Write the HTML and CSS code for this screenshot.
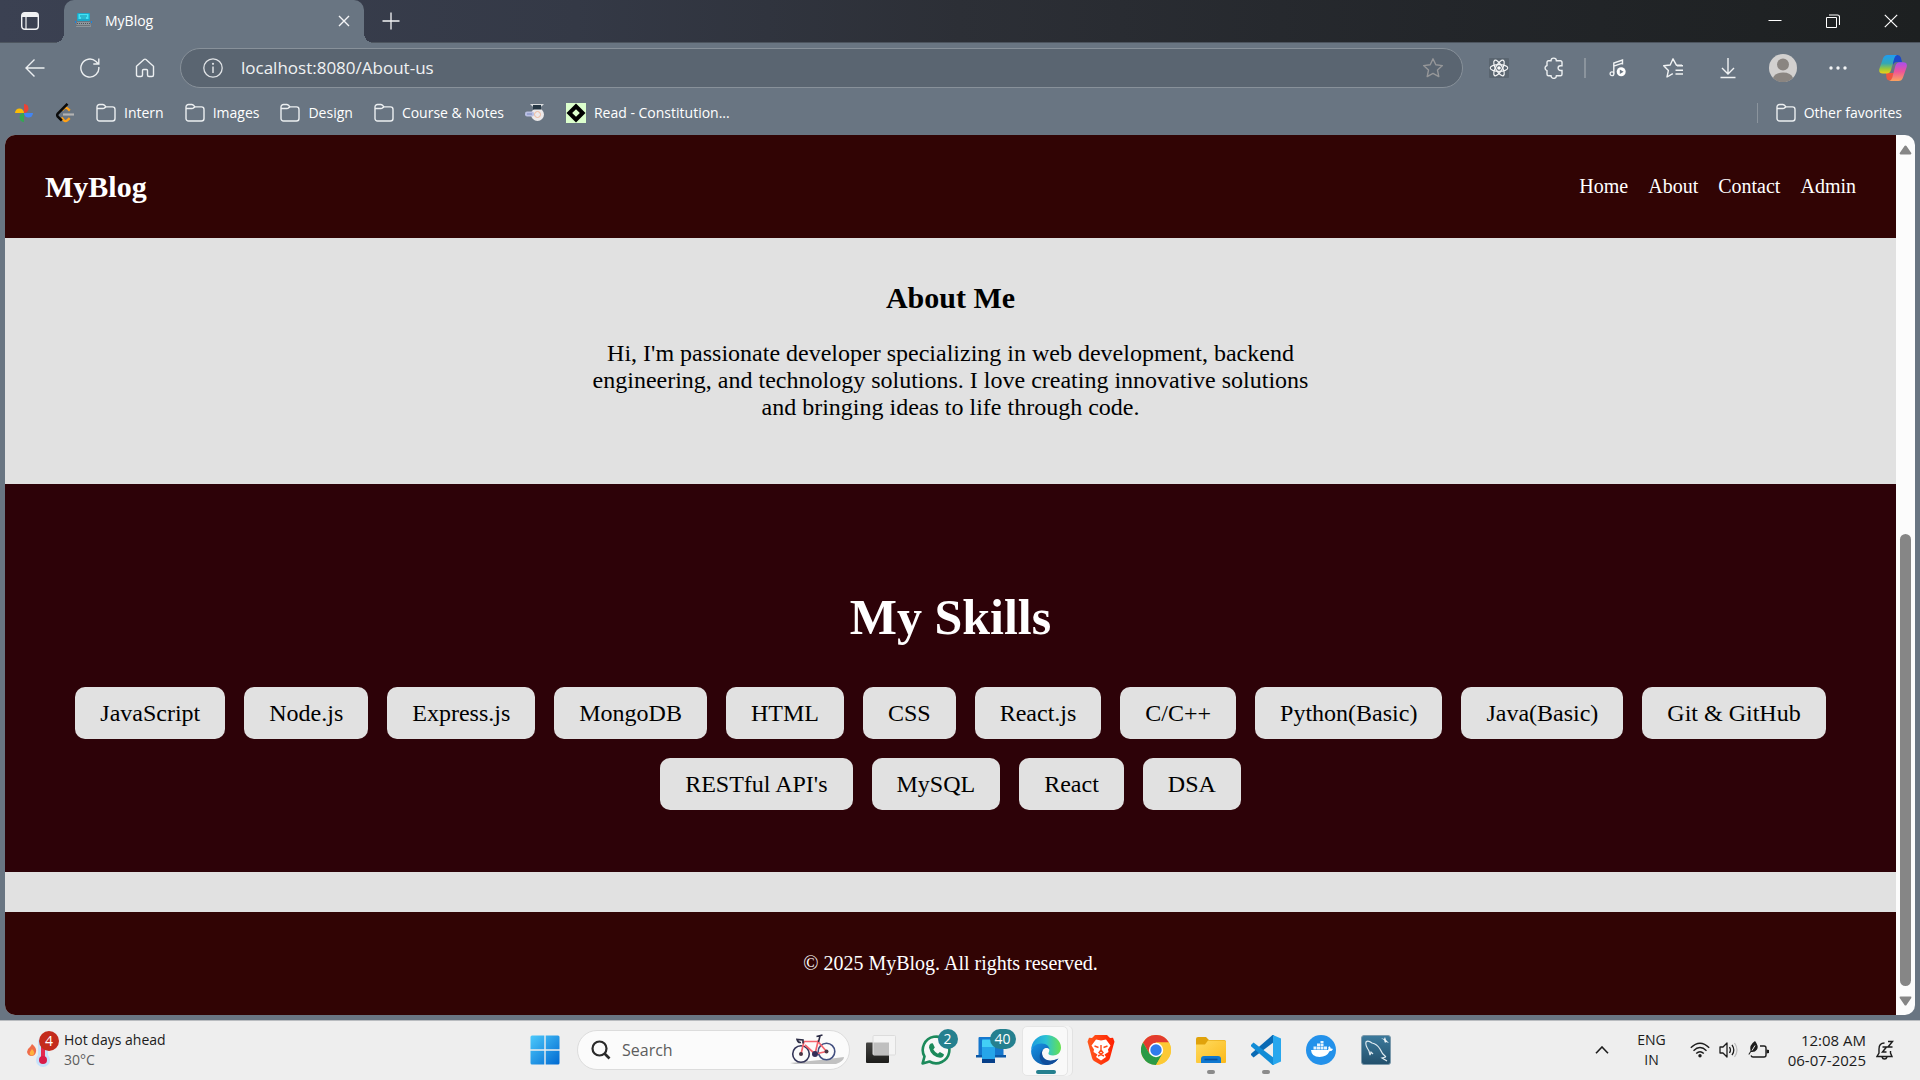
FILE: index.html
```html
<!DOCTYPE html>
<html lang="en">
<head>
<meta charset="utf-8">
<meta name="viewport" content="width=device-width, initial-scale=1">
<title>MyBlog</title>
<link rel="stylesheet" href="styles.css">
</head>
<body>
<svg class="defs" aria-hidden="true">
  <defs>
    <symbol id="folder" viewBox="0 0 20 20"><path d="M1 15.500V4a2.500 2.500 0 0 1 2.500-2.500h3.200c.8 0 1.300.3 1.800.8L10 3.900h6.500A2.500 2.500 0 0 1 19 6.400v9.100a2.500 2.500 0 0 1-2.500 2.500h-13A2.500 2.500 0 0 1 1 15.500zM1.200 5.500h5.600c.8 0 1.300-.2 1.700-.6L10 3.900" fill="none" stroke="#eceff1" stroke-width="1.400"/></symbol>
    <linearGradient id="win" x1="0" y1="0" x2="1" y2="1"><stop offset="0" stop-color="#4cc9fb"/><stop offset="1" stop-color="#0069d1"/></linearGradient>
    <linearGradient id="edgeTop" x1="0" y1="0" x2="1" y2="0"><stop offset="0" stop-color="#1b9ade"/><stop offset=".5" stop-color="#2cc2d5"/><stop offset="1" stop-color="#66e24e"/></linearGradient>
    <linearGradient id="edgeLow" x1="0" y1="0" x2="1" y2="1"><stop offset="0" stop-color="#1694e6"/><stop offset="1" stop-color="#0c4794"/></linearGradient>
    <linearGradient id="brave" x1="0" y1="0" x2="1" y2="0"><stop offset="0" stop-color="#ff5a1f"/><stop offset="1" stop-color="#ff1f00"/></linearGradient>
    <linearGradient id="fold" x1="0" y1="0" x2="1" y2="1"><stop offset="0" stop-color="#ffdb60"/><stop offset="1" stop-color="#fbb91a"/></linearGradient>
    <linearGradient id="sql" x1="0" y1="0" x2="0" y2="1"><stop offset="0" stop-color="#3c7a9c"/><stop offset="1" stop-color="#23506c"/></linearGradient>
    <linearGradient id="dark" x1="0" y1="0" x2="0" y2="1"><stop offset="0" stop-color="#454543"/><stop offset="1" stop-color="#1c1c1a"/></linearGradient>
    <linearGradient id="copA" x1="0" y1="0" x2="0" y2="1"><stop offset="0" stop-color="#1f9df3"/><stop offset=".45" stop-color="#33a7b5"/><stop offset=".75" stop-color="#9ac83a"/><stop offset="1" stop-color="#f2cf16"/></linearGradient>
    <linearGradient id="copB" x1="0" y1="0" x2="0" y2="1"><stop offset="0" stop-color="#a84df0"/><stop offset=".5" stop-color="#ee5499"/><stop offset="1" stop-color="#fca35d"/></linearGradient>
  </defs>
</svg>

<div class="browser">
  <header class="titlebar">
    <button class="tabmenu" aria-label="Tab actions"><svg width="18" height="18" viewBox="0 0 18 18"><rect x=".7" y=".7" width="16.600" height="16.600" rx="3" fill="none" stroke="#f1f2f4" stroke-width="1.400"/><path d="M1 5V3a2 2 0 0 1 2-2h12a2 2 0 0 1 2 2v2z" fill="#f1f2f4"/><path d="M5 5v12" stroke="#f1f2f4" stroke-width="1.200"/></svg></button>
    <div class="tab">
      <svg width="17" height="17" viewBox="0 0 17 17"><rect x="2" y="1" width="13" height="8" rx="1" fill="#1ca8c9"/><rect x="3.500" y="2" width="10" height="5" fill="#42e3f5"/><path d="M5 4h7M6 6h5" stroke="#168ca9"/><path d="M2 10h13l1 5H1z" fill="#8d969c"/><path d="M2 11.500h13M1.500 13.500h14" stroke="#4d5358" stroke-dasharray="1 1"/><path d="M.5 9v2M16.500 9v2" stroke="#1686e0"/></svg>
      <span class="tab-name">MyBlog</span>
      <button class="tab-close" aria-label="Close tab"><svg width="12" height="12" viewBox="0 0 12 12"><path d="M1 1l10 10M11 1L1 11" stroke="#f4f5f6" stroke-width="1.400"/></svg></button>
    </div>
    <button class="newtab" aria-label="New tab"><svg width="18" height="18" viewBox="0 0 18 18"><path d="M9 .5v17M.5 9h17" stroke="#f4f5f6" stroke-width="1.300"/></svg></button>
    <div class="winbtns">
      <button aria-label="Minimize"><svg width="14" height="14" viewBox="0 0 14 14"><path d="M.5 6.500h13" stroke="#fff"/></svg></button>
      <button aria-label="Restore"><svg width="14" height="14" viewBox="0 0 14 14"><path d="M.5 3.500h10v10H.5z" fill="none" stroke="#fff"/><path d="M3 1h8.500q2 0 2 2v8" fill="none" stroke="#fff" stroke-width="1.100"/></svg></button>
      <button aria-label="Close"><svg width="14" height="14" viewBox="0 0 14 14"><path d="M.8.8l12.400 12.400M13.200.8L.8 13.200" stroke="#fff" stroke-width="1.200"/></svg></button>
    </div>
  </header>

  <div class="toolbar">
    <button class="tool" aria-label="Back"><svg width="20" height="20" viewBox="0 0 20 20"><path d="M19.500 10H1M9.500 1.500L1 10l8.500 8.500" fill="none" stroke="#eceff1" stroke-width="1.400"/></svg></button>
    <button class="tool" aria-label="Refresh"><svg width="20" height="20" viewBox="0 0 20 20"><path d="M18.800 9A9 9 0 1 1 16 3.500L18.500 6M18.800.500V6h-5.500" fill="none" stroke="#eceff1" stroke-width="1.400"/></svg></button>
    <button class="tool" aria-label="Home"><svg width="20" height="20" viewBox="0 0 20 20"><path d="M1.500 8.300L9 1.500q1-.8 2 0l7.500 6.800V17a1.500 1.500 0 0 1-1.500 1.500h-3A1.500 1.500 0 0 1 12.500 17v-4.500a1 1 0 0 0-1-1h-3a1 1 0 0 0-1 1V17A1.500 1.500 0 0 1 6 18.500H3A1.500 1.500 0 0 1 1.500 17z" fill="none" stroke="#eceff1" stroke-width="1.400"/></svg></button>
    <div class="address">
      <svg width="20" height="20" viewBox="0 0 20 20"><circle cx="10" cy="10" r="9.200" fill="none" stroke="#e0e3e6" stroke-width="1.300"/><path d="M10 8.500V15" stroke="#e0e3e6" stroke-width="1.500"/><circle cx="10" cy="5.800" r="1.100" fill="#e0e3e6"/></svg>
      <input type="text" value="localhost:8080/About-us" aria-label="Address">
      <button aria-label="Add to favorites"><svg width="22" height="22" viewBox="0 0 22 22"><path d="M11 1.800l2.800 6 6.600.8-4.900 4.500 1.300 6.500L11 16.400l-5.800 3.200 1.300-6.500L1.600 8.600l6.600-.8z" fill="none" stroke="#969799" stroke-width="1.400" stroke-linejoin="round"/></svg></button>
    </div>
    <button class="tool" aria-label="React developer tools"><svg width="20" height="20" viewBox="0 0 20 20"><rect width="20" height="20" rx="1" fill="#5a6570"/><g fill="none" stroke="#f3f4f5" stroke-width="1.200"><ellipse cx="10" cy="10" rx="8.800" ry="3.300"/><ellipse cx="10" cy="10" rx="8.800" ry="3.300" transform="rotate(60 10 10)"/><ellipse cx="10" cy="10" rx="8.800" ry="3.300" transform="rotate(120 10 10)"/></g><circle cx="10" cy="10" r="1.800" fill="#fff"/></svg></button>
    <button class="tool" aria-label="Extensions"><svg width="22" height="22" viewBox="0 0 22 22"><path d="M8 3.800a2.700 2.700 0 0 1 5.400 0h4.100a1.500 1.500 0 0 1 1.500 1.500v3.400h-1.500a2.400 2.400 0 0 0 0 4.800H19v3.700a1.500 1.500 0 0 1-1.500 1.500h-4.100a2.700 2.700 0 0 1-5.400 0H5.500A1.500 1.500 0 0 1 4 17.200v-3.500a2.700 2.700 0 0 1 0-5.200V5.300a1.500 1.500 0 0 1 1.500-1.500z" fill="none" stroke="#eceff1" stroke-width="1.400"/></svg></button>
    <span class="divider"></span>
    <button class="tool" aria-label="Media"><svg width="20" height="20" viewBox="0 0 20 20"><path d="M5.800 15.500V5L14.500 2v4.500M5.800 8.200l8.700-3" fill="none" stroke="#f1f3f4" stroke-width="1.400"/><circle cx="4" cy="15.800" r="1.900" fill="none" stroke="#f1f3f4" stroke-width="1.300"/><circle cx="13.200" cy="13.800" r="4.500" fill="#fff"/><path d="M11.800 11.500v4.600l3.800-2.300z" fill="#697582"/></svg></button>
    <button class="tool" aria-label="Favorites"><svg width="22" height="22" viewBox="0 0 22 22"><path d="M20 8.200h-5.600L11 1.800 8.200 8l-6.500.7 4.700 4.700L5 20l5.800-3.400M13.500 13.200H21M13.500 17H21M15 8.700h6" fill="none" stroke="#f1f3f4" stroke-width="1.400" stroke-linejoin="round"/></svg></button>
    <button class="tool" aria-label="Downloads"><svg width="20" height="22" viewBox="0 0 20 22"><path d="M10 1v16M4 11l6 6 6-6M2.500 20.500h15" fill="none" stroke="#f1f3f4" stroke-width="1.400"/></svg></button>
    <button class="tool" aria-label="Profile"><svg width="28" height="28" viewBox="0 0 28 28"><circle cx="14" cy="14" r="14" fill="#d2d0cf"/><circle cx="14" cy="10.500" r="6" fill="#8a8581"/><path d="M4 24q2-5.500 10-5.500T24 24A14 14 0 0 1 4 24z" fill="#8a8581"/></svg></button>
    <button class="tool" aria-label="Settings and more"><svg width="18" height="4" viewBox="0 0 18 4"><g fill="#f3f4f5"><circle cx="2" cy="2" r="1.700"/><circle cx="9" cy="2" r="1.700"/><circle cx="16" cy="2" r="1.700"/></g></svg></button>
    <button class="tool" aria-label="Copilot"><svg width="28" height="28" viewBox="0 0 28 28"><path d="M14 1h4.500q2.500 0 3.300 2.500L23 8h-5q-3 0-4 3z" fill="#1b49c8"/><path d="M7 19h8l-1.500 5q-.8 2.500-3 2.500T7.500 24z" fill="#ef5440"/><path d="M8.500 1H18q-2 .5-2.800 3.500L12 16q-1 3.500-4.500 3.500H3.800Q-.5 19.500.3 15L4 4.500Q5.200 1 8.500 1z" fill="url(#copA)"/><path d="M19.500 27H10q2.500-.5 3.300-3.500l3-11.500q1-3.800 4.700-3.800h3.200q4.500 0 3.500 4.800L24 23.500Q22.800 27 19.500 27z" fill="url(#copB)"/></svg></button>
  </div>

  <nav class="bookmarks" aria-label="Favorites bar">
    <a href="#" aria-label="Photos"><svg width="20" height="20" viewBox="0 0 20 20"><path d="M10 10V1a4.500 4.500 0 0 1 0 9z" fill="#ea4335"/><path d="M10 10h9a4.500 4.500 0 0 1-9 0z" fill="#4285f4"/><path d="M10 10v9a4.500 4.500 0 0 1 0-9z" fill="#34a853"/><path d="M10 10H1a4.500 4.500 0 0 1 9 0z" fill="#fbbc04"/></svg></a>
    <a href="#" aria-label="LeetCode"><svg width="20" height="20" viewBox="0 0 20 20"><path d="M6.500 14.500l2.200 2.600q1.800 1.900 3.800 0l2.200-2M7 7.500l1.800-2q1.800-1.800 3.700 0l2.300 2.100" fill="none" stroke="#ffa116" stroke-width="2.300"/><path d="M12.500.8l-9.700 9.800q-1.200 1.500 0 3L6.800 17.500" fill="none" stroke="#0a0a0a" stroke-width="2.500"/><path d="M8 11.500h11" stroke="#b3b3b3" stroke-width="2.200"/></svg></a>
    <a href="#"><svg width="20" height="20"><use href="#folder"/></svg>Intern</a>
    <a href="#"><svg width="20" height="20"><use href="#folder"/></svg>Images</a>
    <a href="#"><svg width="20" height="20"><use href="#folder"/></svg>Design</a>
    <a href="#"><svg width="20" height="20"><use href="#folder"/></svg>Course &amp; Notes</a>
    <a href="#" aria-label="Graduate"><svg width="20" height="20" viewBox="0 0 20 20"><circle cx="12.500" cy="11.500" r="6.500" fill="#ece9ea"/><circle cx="12.500" cy="11.500" r="3" fill="none" stroke="#eeb79b"/><path d="M5 1h14l-2.500 2.500h-9z" fill="#d9dcde"/><path d="M8 2h8v4.500H8z" fill="#263744"/><rect y="8.500" width="9" height="5" rx="2" fill="#b9bfe2"/><path d="M2 11h5" stroke="#7484bd"/></svg></a>
    <a href="#"><svg width="20" height="20" viewBox="0 0 20 20"><path fill="#dcffcd" d="M0 0h20v20H0z"/><path d="M10 .5l9.500 9.500-9.500 9.500L.5 10z"/><path d="M10 6.200l3.800 3.800-3.800 3.800L6.200 10z" fill="#dcffcd"/></svg>Read - Constitution...</a>
    <span class="divider push"></span>
    <a href="#"><svg width="20" height="20"><use href="#folder"/></svg>Other favorites</a>
  </nav>

  <div class="viewport">
    <div class="site">
      <header class="site-header">
        <h1 class="brand">MyBlog</h1>
        <nav class="site-nav">
          <a href="#">Home</a><a href="#">About</a><a href="#">Contact</a><a href="#">Admin</a>
        </nav>
      </header>
      <main>
        <section class="about">
          <h2>About Me</h2>
          <p>Hi, I'm passionate developer specializing in web development, backend engineering, and technology solutions. I love creating innovative solutions and bringing ideas to life through code.</p>
        </section>
        <section class="skills">
          <h2>My Skills</h2>
          <ul>
            <li>JavaScript</li><li>Node.js</li><li>Express.js</li><li>MongoDB</li><li>HTML</li><li>CSS</li><li>React.js</li><li>C/C++</li><li>Python(Basic)</li><li>Java(Basic)</li><li>Git &amp; GitHub</li><li>RESTful API's</li><li>MySQL</li><li>React</li><li>DSA</li>
          </ul>
        </section>
      </main>
      <footer class="site-footer">© 2025 MyBlog. All rights reserved.</footer>
    </div>
    <div class="scrollbar" aria-hidden="true">
      <svg width="13" height="10" viewBox="0 0 13 10"><path d="M6.500.5q.6 0 1 .6l4.800 7q.5 1.400-.9 1.400H1.600Q.2 9.500.7 8.100l4.800-7q.4-.6 1-.6z" fill="#868686"/></svg>
      <div class="track"><div class="thumb"></div></div>
      <svg width="13" height="10" viewBox="0 0 13 10"><path d="M6.500 9.500q.6 0 1-.6l4.800-7Q12.800.5 11.400.5H1.600Q.2.5.7 1.900l4.800 7q.4.6 1 .6z" fill="#868686"/></svg>
    </div>
  </div>
</div>

<footer class="taskbar">
  <button class="weather">
    <span class="weather-icon">
      <svg width="32" height="36" viewBox="0 0 32 36"><path d="M6 12q5 4 4 8t-4.500 4T1 20q0-3 3-5 1-1 2-3z" fill="#ef6c4a"/><path d="M6 17q3 3 2 5t-3 1.500Q3 22 4 20z" fill="#ffb13d"/><rect x="12" y="5" width="10" height="24" rx="5" fill="#c5e1fb"/><circle cx="17" cy="28" r="7" fill="#c5e1fb"/><path d="M17 10v18" stroke="#e3294f" stroke-width="4"/><circle cx="17" cy="28" r="4" fill="#d81b49"/></svg>
      <span class="badge alert">4</span>
    </span>
    <span class="weather-text"><span>Hot days ahead</span><span class="muted">30°C</span></span>
  </button>

  <div class="apps">
    <button class="app" aria-label="Start"><svg width="30" height="30" viewBox="0 0 30 30"><path d="M.5 2Q.5.500 2 .500h12.300v13.800H.5zM15.700.500H28q1.500 0 1.500 1.500v12.300H15.700zM.5 15.700h13.800v13.800H2Q.5 29.500.5 28zM15.700 15.700h13.800V28q0 1.500-1.500 1.500H15.700z" fill="url(#win)"/></svg></button>
    <label class="search">
      <svg width="20" height="20" viewBox="0 0 20 20"><circle cx="8.500" cy="8.500" r="7" fill="none" stroke="#2a2a2a" stroke-width="2.200"/><path d="M13.500 13.500l5 5" stroke="#2a2a2a" stroke-width="2.600"/></svg>
      <input type="text" placeholder="Search" aria-label="Search">
      <svg width="56" height="32" viewBox="0 0 56 32"><path d="M1 29l30-3 24-3q0 4-8 7H6z" fill="#c1c1c1"/><circle cx="12" cy="20" r="8.300" fill="none" stroke="#343558" stroke-width="1.600"/><circle cx="37.500" cy="17.500" r="8.300" fill="none" stroke="#435080" stroke-width="1.600"/><path d="M12 20l3-12.500h14L26 20l-10-9M26 20l3-12.500 8.500 10-11.500 2.500" fill="none" stroke="#f5646d" stroke-width="1.700"/><path d="M29.500 8l1.500-6M27.500 2.500l6-1.500M14 9.500V6L8 5.500q1 3.500 4 3" fill="none" stroke="#2c2c45" stroke-width="1.600"/><circle cx="26" cy="20" r="3" fill="#342d58"/><circle cx="12" cy="20" r="2" fill="#4a3543"/><circle cx="37.500" cy="17.500" r="2" fill="#4a3543"/></svg>
    </label>
    <button class="app" aria-label="Task view"><svg width="30" height="30" viewBox="0 0 30 30"><rect y="7.500" width="23" height="20.500" rx="1" fill="url(#dark)"/><rect x="7" y=".5" width="22.500" height="19.500" rx="1" fill="#f4f4f4" stroke="#dcdcdc"/><path d="M7.500 7.500H23V20H7.500z" fill="#bfbfbf"/></svg></button>
    <button class="app" aria-label="WhatsApp"><span class="app-icon"><svg width="30" height="30" viewBox="0 0 30 30"><path d="M1.600 28.400L3.500 21.500A13.300 13.300 0 1 1 8.500 26.500z" fill="#f7f7f7" stroke="#1c8a5b" stroke-width="2.600" stroke-linejoin="round"/><path d="M9.800 8.500l2-.3 2 4.300-1.500 2q1.800 3 4.600 4.300l2-1.800 4 2.200q0 3.300-3.800 3.500Q10 21.500 8 12.500q0-2.800 1.800-4z" fill="#1c8a5b"/></svg><span class="badge">2</span></span></button>
    <button class="app" aria-label="Phone Link"><span class="app-icon"><svg width="30" height="30" viewBox="0 0 30 30"><path d="M2.500 3Q2.500 2 3.500 2h24v20h-25z" fill="#1577cd"/><path d="M0 20h30v2.500H0z" fill="#0b58a6"/><rect x="6" y="4" width="13" height="24" rx="1" fill="#26a5e9"/><path d="M6 6q0-1 1-1h11q1 0 1 1v6H6z" fill="#43cff5"/><path d="M6 24h13v4H6z" fill="#063f89"/></svg><span class="badge wide">40</span></span></button>
    <button class="app active" aria-label="Edge"><svg width="30" height="30" viewBox="0 0 30 30"><path d="M.1 16C0 6 7 0 15 0c9 0 15 6 15 12.500 0 5-3.500 8-8 8-3.500 0-5-1.200-4.500-2.500 2-3 .5-8.500-6-8.500C6 9.500 1 12 .1 16z" fill="url(#edgeTop)"/><path d="M.1 16C1 12 5 8.500 10.500 8.500c5.500 0 8 3.500 8 6-1-2.500-7.500-2.500-7.500 3.500 0 7 7.500 10 16.500 5.500C24 28 20 30 15 30 6 30 0 23.500.1 16z" fill="url(#edgeLow)"/><path d="M11 18c0 7 7.500 10 16.500 5.500C24 28 20 30 15.500 30 8 28 6 19 13 13.500 11.500 15 11 16.500 11 18z" fill="#104e9c"/></svg></button>
    <button class="app" aria-label="Brave"><svg width="28" height="30" viewBox="0 0 28 30"><path d="M8 0h12l3 3 3-.3 1.500 4-1 3.300-3.500 13q-.5 2-2 3L14 30l-7-4q-1.500-1-2-3L1.500 10l-1-3.300 1.500-4L5 3z" fill="url(#brave)"/><path d="M9 4.500l5 1 5-1 4.500 6-2.500 4 .5 2.500-4 2.500 1.500 2.500-5 3.500-5-3.500L10.500 19.500l-4-2.500.5-2.500-2.500-4z" fill="#fff"/><path d="M7.500 11l4 1.500M20.500 11l-4 1.500M14 10v5l-2 2.500 2 1.500 2-1.500-2-2.500M11 21l3-1.500 3 1.500" fill="none" stroke="#ff4a1a" stroke-width="1.400"/></svg></button>
    <button class="app" aria-label="Chrome"><svg width="30" height="30" viewBox="0 0 30 30"><circle cx="15" cy="15" r="15" fill="#fcc934"/><path d="M2 7.500A15 15 0 0 1 28 7.500H15L8.500 18.700z" fill="#e33b2e"/><path d="M2 7.500A15 15 0 0 0 15 30l6.500-11.300-13 0z" fill="#2a9a46"/><path d="M28 7.500A15 15 0 0 1 15 30l6.500-11.300L15 7.500z" fill="#fcc934"/><circle cx="15" cy="15" r="7.200" fill="#fff"/><circle cx="15" cy="15" r="5.700" fill="#2f7cec"/></svg></button>
    <button class="app running" aria-label="File Explorer"><svg width="30" height="28" viewBox="0 0 30 28"><path d="M0 3q0-2 2-2h8l3 3h15q2 0 2 2v5H0z" fill="#e0a20b"/><path d="M0 8.500h9L12 4.500h16q2 0 2 2V26q0 1-1 1H1q-1 0-1-1z" fill="url(#fold)"/><path d="M5 27v-4q0-3 3-3h14q3 0 3 3v4z" fill="#0f78d0"/><path d="M8.500 23.500h13" stroke="#074f9c" stroke-width="1.600"/></svg></button>
    <button class="app running" aria-label="Visual Studio Code"><svg width="30" height="30" viewBox="0 0 30 30"><path d="M0 20l2.500 2.500L23 7V0h-1.500L.3 18.500q-.6.800-.3 1.500z" fill="#0a6ab4"/><path d="M0 10l2.500-2.500L23 23v7h-1.500L.3 11.500Q-.3 10.700 0 10z" fill="#118cd6"/><path d="M22 0l8 3.500v23L22 30z" fill="#27a7ee"/></svg></button>
    <button class="app" aria-label="Docker"><svg width="30" height="30" viewBox="0 0 30 30"><circle cx="15" cy="15" r="15" fill="#2391ea"/><path d="M5 15h17q.8-1 .3-3l1.200-.8q1.300 1 1.300 2.500 1.200-.3 2.200.3-.7 2.200-3.500 2.300Q21 22 13.500 22 5.500 22 5 15z" fill="#fff"/><path d="M7.500 11.500h3v3h-3zM11 11.500h3v3h-3zM14.500 11.500h3v3h-3zM18 11.500h3v3h-3zM11 8.500h3v2.500h-3zM14.500 8.500h3v2.500h-3zM14.500 6h3v2h-3z" fill="#e6f3fd"/></svg></button>
    <button class="app" aria-label="MySQL Workbench"><svg width="30" height="30" viewBox="0 0 30 30"><rect x=".5" y=".5" width="29" height="29" rx="2.500" fill="url(#sql)" stroke="#7b99ab"/><path d="M9 20l-1-4q-4-6-3-9 2-2 6 1 5 1 8 6 2 5 6 8M25 22l-4 1 5 3M9 20l1-3 2 2" fill="none" stroke="#dfeaf0" stroke-width="1.200"/><path d="M20 3l3 1 1-2 1 3 3 3-3-1-1 1-1-3z" fill="#eef4f7"/></svg></button>
  </div>

  <div class="tray">
    <button class="chevron" aria-label="Hidden icons"><svg width="14" height="8" viewBox="0 0 14 8"><path d="M1 7.200L7 1l6 6.200" fill="none" stroke="#1c1c1c" stroke-width="1.600"/></svg></button>
    <button class="lang"><span>ENG</span><span>IN</span></button>
    <button class="status" aria-label="Network, sound and battery">
      <svg width="20" height="16" viewBox="0 0 20 16"><path d="M.8 5.800q9.200-9 18.400 0M3.500 8.700q6.500-6.200 13 0M6.200 11.500q3.800-3.600 7.600 0" fill="none" stroke="#1c1c1c" stroke-width="1.400"/><circle cx="10" cy="13.800" r="1.700" fill="#1c1c1c"/></svg>
      <svg width="20" height="18" viewBox="0 0 20 18"><path d="M1 6h3l4-4v14l-4-4H1z" fill="none" stroke="#1c1c1c" stroke-width="1.300" stroke-linejoin="round"/><path d="M10.500 6q2 3 0 6M13 3.800q3.600 5.200 0 10.400" fill="none" stroke="#1c1c1c" stroke-width="1.300"/><path d="M15.500 2q5 7 0 14" fill="none" stroke="#bbb" stroke-width="1.200"/></svg>
      <svg width="22" height="18" viewBox="0 0 22 18"><path d="M3 14.500q.5 1.500 2 1.500h11q2 0 2-2V7q0-2-2-2h-4" fill="none" stroke="#1c1c1c" stroke-width="1.400"/><path d="M18.500 8.500l2.500.5v3l-2.500.5z" fill="#1c1c1c"/><path d="M7 0q4 5 2 8.500-2 3-6 2.500l-2 3-.5-1 2-3Q1 4 7 0z" fill="#1c1c1c"/><path d="M7 4.500L4 9.500" stroke="#eee"/></svg>
    </button>
    <button class="clock"><span>12:08 AM</span><span>06-07-2025</span></button>
    <button aria-label="Notifications"><svg width="18" height="20" viewBox="0 0 18 20"><path d="M8.500 3Q3 3 3 9v4l-2 3.500h15L14.500 13v-2M6 17q.5 2 2.500 2t2.500-2" fill="none" stroke="#1c1c1c" stroke-width="1.400"/><path d="M6.500 7h4l-4 5h4M12 1.500h4.500L12 7h4.500" fill="none" stroke="#1c1c1c" stroke-width="1.500"/></svg></button>
  </div>
</footer>
</body>
</html>
```
FILE: styles.css
```css
* { box-sizing: border-box; }

body {
  margin: 0;
  min-height: 100vh;
  display: flex;
  flex-direction: column;
  font: 14px/20px "Open Sans", "Noto Sans", sans-serif;
}

.defs { position: absolute; width: 0; height: 0; }
svg { flex: none; display: block; }

button {
  display: flex;
  align-items: center;
  justify-content: center;
  padding: 0;
  border: 0;
  background: none;
  color: inherit;
  font: inherit;
}

input {
  flex: 1;
  min-width: 0;
  padding: 0;
  border: 0;
  outline: 0;
  background: none;
  font: inherit;
}

/* Browser window */
.browser {
  flex: 1;
  display: flex;
  flex-direction: column;
  background: #697582;
  color: #fff;
}

.titlebar {
  height: 43px;
  display: flex;
  background: linear-gradient(90deg, #3b4152, #343946 30%, #2c2f36 50%, #23262a 75%, #1d2021);
  border-bottom: 1px solid #4d555f;
}
.tabmenu { width: 60px; margin-right: 4px; }
.tab {
  position: relative;
  width: 300px;
  height: 43px;
  display: flex;
  align-items: center;
  gap: 13px;
  padding: 0 14px 2px 11px;
  border-radius: 10px 10px 0 0;
  background: #697582;
}
.tab::before, .tab::after {
  content: "";
  position: absolute;
  bottom: 0;
  width: 10px;
  height: 10px;
}
.tab::before { left: -10px; background: radial-gradient(circle at 0 0, transparent 10px, #697582 10px); }
.tab::after { right: -10px; background: radial-gradient(circle at 100% 0, transparent 10px, #697582 10px); }
.tab-name { flex: 1; }
.newtab { width: 54px; }
.winbtns { margin-left: auto; display: flex; }
.winbtns button { width: 58px; }

.toolbar {
  display: flex;
  align-items: center;
  padding: 5px 0 5px 7px;
}
.tool { width: 55px; height: 40px; }
.address {
  flex: 1;
  height: 40px;
  margin: 0 8px;
  padding: 0 18px 0 22px;
  display: flex;
  align-items: center;
  gap: 18px;
  border: 1px solid #88919a;
  border-radius: 20px;
  background: #5a6571;
  font-size: 17px;
}
.address input { color: #f0f2f3; }
.divider { width: 2px; height: 20px; margin: 0 4px 0 3px; background: #8b949d; }

.bookmarks {
  display: flex;
  align-items: center;
  gap: 21px;
  height: 42px;
  padding: 0 18px 2px 14px;
}
.bookmarks a {
  display: flex;
  align-items: center;
  gap: 8px;
  color: #fff;
  text-decoration: none;
}
.bookmarks .push { width: 1px; margin: 0 -3px 0 auto; }

.viewport {
  flex: 1;
  display: flex;
  margin: 0 5px 5px;
  border-radius: 10px;
  overflow: hidden;
}

.scrollbar {
  width: 19px;
  display: flex;
  flex-direction: column;
  align-items: center;
  gap: 10px;
  padding: 10px 0 9px;
  background: #fcfcfc;
}
.track { flex: 1; display: flex; align-items: flex-end; }
.thumb { width: 11px; height: 55%; border-radius: 6px; background: #868686; }

/* Blog page */
.site {
  flex: 1;
  background: #e1e1e1;
  color: #000;
  font-family: "Liberation Serif", serif;
}
.site-header {
  display: flex;
  align-items: center;
  justify-content: space-between;
  padding: 34px 40px;
  background: #310404;
  color: #fff;
}
.brand { margin: 0; font-size: 30px; line-height: 35px; }
.site-nav { display: flex; gap: 20px; font-size: 20px; line-height: 23px; }
.site-nav a { color: #fff; text-decoration: none; }

.about { padding: 43px 40px 63px; text-align: center; }
.about h2 { margin: 0 0 25px; font-size: 30px; line-height: 34px; }
.about p {
  max-width: 750px;
  margin: 0 auto;
  font-size: 24px;
  line-height: 27px;
}

.skills {
  margin-bottom: 40px;
  padding: 105px 40px 62px;
  background: #2d0208;
  text-align: center;
}
.skills h2 { margin: 0 0 42px; color: #fff; font-size: 50px; line-height: 56px; }
.skills ul {
  display: flex;
  flex-wrap: wrap;
  justify-content: center;
  gap: 19px;
  margin: 0;
  padding: 0;
  list-style: none;
}
.skills li {
  padding: 12px 25px;
  border-radius: 10px;
  background: #e1e1e1;
  font-size: 24px;
  line-height: 28px;
}

.site-footer {
  padding: 40px;
  background: #310404;
  color: #fff;
  text-align: center;
  font-size: 20px;
  line-height: 23px;
}

/* Taskbar */
.taskbar {
  height: 60px;
  display: grid;
  grid-template-columns: 1fr auto 1fr;
  padding-bottom: 2px;
  border-top: 1px solid #b9bcc0;
  background: #eee;
  color: #1b1b1b;
}
.weather { justify-content: flex-start; gap: 6px; padding-left: 26px; }
.weather-icon, .app-icon { position: relative; }
.weather-text { display: flex; flex-direction: column; align-items: flex-start; }
.muted { color: #5d5d5d; }
.badge {
  position: absolute;
  top: -6px;
  left: 17px;
  min-width: 20px;
  height: 20px;
  border-radius: 10px;
  background: #25808f;
  color: #fff;
  text-align: center;
}
.badge.wide { left: 14px; min-width: 26px; }
.badge.alert { top: -1px; left: 13px; background: #c42b1c; }

.apps { display: flex; align-items: center; }
.app { position: relative; width: 55px; height: 57px; }
.app svg { position: relative; }
.search {
  width: 273px;
  height: 40px;
  margin: 0 3px 0 5px;
  padding: 0 4px 0 13px;
  display: flex;
  align-items: center;
  gap: 11px;
  border: 1px solid #dcdcdc;
  border-radius: 20px;
  background: #fbfbfb;
  font-size: 16px;
}
.search input::placeholder { color: #5d5d5d; opacity: 1; }
.active::before {
  content: "";
  position: absolute;
  top: 5px;
  left: 4px;
  width: 44px;
  height: 48px;
  border: 1px solid #e5e5e5;
  border-radius: 5px;
  background: #f9f9f9;
  box-shadow: 4px 0 #f5f5f5, 5px 0 #e2e2e2;
}
.active::after, .running::after {
  content: "";
  position: absolute;
  bottom: 4px;
  width: 20px;
  height: 4px;
  border-radius: 2px;
  background: #25808f;
}
.running::after { width: 8px; background: #8a8a8a; }

.tray { display: flex; justify-content: flex-end; gap: 20px; padding-right: 26px; }
.chevron { margin-right: 8px; }
.lang, .clock { flex-direction: column; }
.lang { margin-right: 4px; }
.clock { align-items: flex-end; margin-right: -10px; font-size: 15px; }
.status { gap: 9px; margin-right: -2px; }
```
